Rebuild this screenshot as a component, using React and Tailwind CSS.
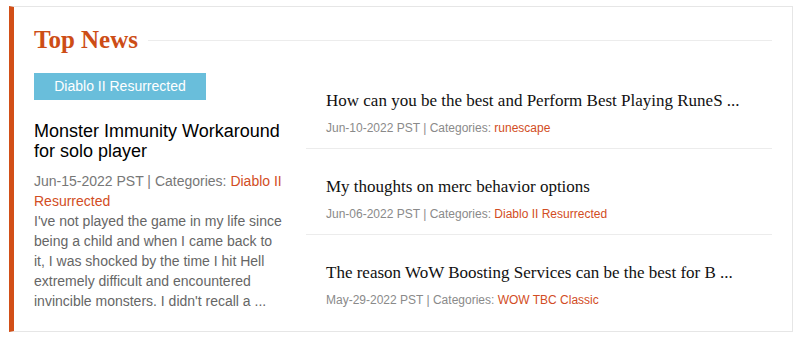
import React from "react";

const news = [
  {
    title: "How can you be the best and Perform Best Playing RuneS ...",
    date: "Jun-10-2022 PST",
    category: "runescape",
  },
  {
    title: "My thoughts on merc behavior options",
    date: "Jun-06-2022 PST",
    category: "Diablo II Resurrected",
  },
  {
    title: "The reason WoW Boosting Services can be the best for B ...",
    date: "May-29-2022 PST",
    category: "WOW TBC Classic",
  },
];

const NewsItem = ({ item, last }) => (
  <div
    className={`pl-5 pt-[26px] pb-[11px] ${
      last ? "" : "border-b border-[#ececec]"
    }`}
  >
    <h3 className="text-[17px] leading-6 text-[#111] font-['Liberation_Serif',serif]">
      {item.title}
    </h3>
    <p className="mt-[6px] text-[12px] leading-[18px] text-[#8a8a8a]">
      {item.date} | Categories:{" "}
      <a className="text-[#d24d24]">{item.category}</a>
    </p>
  </div>
);

export default function App() {
  return (
    <div className="w-[799px] h-[340px] bg-white pt-[6px] pl-[9px] font-['Liberation_Sans',Arial,sans-serif]">
      <div className="w-[784px] h-[326px] border-t border-r border-b border-[#e6e6e6] border-l-[5px] border-l-[#d24f17] pl-5 pr-5 pt-[17px]">
        <div className="flex items-center gap-[10px] h-8">
          <h2 className="text-[25px] font-bold leading-8 text-[#cd4d16] font-['Liberation_Serif',serif]">
            Top News
          </h2>
          <div className="flex-1 h-px bg-[#ececec]"></div>
        </div>

        <div className="flex gap-[22px]">
          <div className="w-[250px] shrink-0 pt-[17px]">
            <span className="flex items-center justify-center w-[172px] h-[27px] bg-[#69bedb] text-white text-[14px]">
              Diablo II Resurrected
            </span>
            <h3 className="mt-[21px] text-[18px] leading-5 text-black">
              Monster Immunity Workaround for solo player
            </h3>
            <p className="mt-[10px] text-[14px] leading-5 text-[#777]">
              Jun-15-2022 PST | Categories:{" "}
              <a className="text-[#d24d24]">Diablo II Resurrected</a>
            </p>
            <p className="text-[14px] leading-5 text-[#666]">
              I've not played the game in my life since being a child and when
              I came back to it, I was shocked by the time I hit Hell extremely
              difficult and encountered invincible monsters. I didn't recall a
              ...
            </p>
          </div>

          <div className="flex-1 pt-[7px]">
            {news.map((item, i) => (
              <NewsItem key={i} item={item} last={i === news.length - 1} />
            ))}
          </div>
        </div>
      </div>
    </div>
  );
}
